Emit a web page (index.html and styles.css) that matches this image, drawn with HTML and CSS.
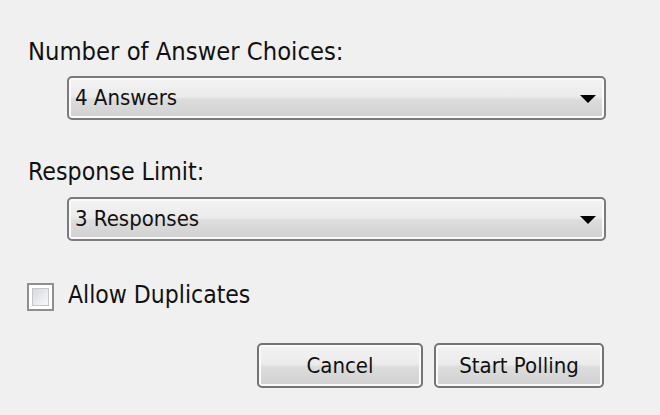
FILE: index.html
```html
<!DOCTYPE html>
<html>
<head>
<meta charset="utf-8">
<link rel="stylesheet" href="styles.css">
</head>
<body>
<div class="dialog">
  <div class="label first-label">Number of Answer Choices:</div>
  <div class="combo first">
    <span class="combo-text">4 Answers</span>
    <svg class="arrow" width="16" height="8" viewBox="0 0 16 8"><polygon points="0,0 16,0 8,8" fill="#000"/></svg>
  </div>
  <div class="label second">Response Limit:</div>
  <div class="combo">
    <span class="combo-text">3 Responses</span>
    <svg class="arrow" width="16" height="8" viewBox="0 0 16 8"><polygon points="0,0 16,0 8,8" fill="#000"/></svg>
  </div>
  <div class="check-row">
    <span class="checkbox"><span class="check-inner"></span></span>
    <span class="check-label">Allow Duplicates</span>
  </div>
  <div class="buttons">
    <div class="btn cancel">Cancel</div>
    <div class="btn start">Start Polling</div>
  </div>
</div>
</body>
</html>
```
FILE: styles.css
```css
html, body {
  margin: 0;
  padding: 0;
  background: #f0f0f0;
}
body {
  width: 660px;
  height: 415px;
  overflow: hidden;
  font-family: "DejaVu Sans Condensed", "DejaVu Sans", sans-serif;
  font-stretch: condensed;
  color: #111111;
}
.dialog {
  display: flex;
  flex-direction: column;
  padding: 38px 54px 0 28px;
}
.label {
  font-size: 25px;
  line-height: 28px;
  height: 28px;
  white-space: nowrap;
}
.label.first-label {
  font-size: 25.3px;
}
.label.second {
  margin-top: 38px;
  font-size: 24.7px;
}
.combo {
  box-sizing: border-box;
  margin-left: 39px;
  height: 44px;
  margin-top: 11px;
  border: 2px solid #7b7b7b;
  border-radius: 5px;
  background: linear-gradient(#f3f3f3 0%, #ebebeb 47%, #dddddd 53%, #d0d0d0 100%);
  box-shadow: inset 0 0 0 2px #fafafa;
  display: flex;
  align-items: center;
  justify-content: space-between;
  padding: 0 8px 0 6px;
}
.combo.first {
  margin-top: 10px;
}
.combo-text {
  font-size: 22px;
  line-height: 26px;
}
.arrow {
  display: block;
  margin-top: 1px;
}
.check-row {
  display: flex;
  align-items: flex-start;
  margin-top: 40px;
  height: 30px;
}
.checkbox {
  box-sizing: border-box;
  width: 27px;
  height: 28px;
  margin-top: 2px;
  margin-left: -1px;
  border: 2px solid #8e8f8f;
  background: #ffffff;
  padding: 3px;
  display: flex;
}
.check-inner {
  flex: 1;
  border: 1px solid #c4c6c9;
  background: linear-gradient(135deg, #d6d9de 0%, #eef0f2 70%, #f7f7f7 100%);
}
.check-label {
  font-size: 24.5px;
  line-height: 28px;
  margin-left: 14px;
}
.buttons {
  display: flex;
  justify-content: flex-end;
  gap: 11px;
  margin-top: 32px;
  margin-right: 2px;
}
.btn {
  box-sizing: border-box;
  height: 45px;
  border: 2px solid #747474;
  border-radius: 5px;
  background: linear-gradient(#f3f3f3 0%, #ebebeb 47%, #dddddd 53%, #d0d0d0 100%);
  box-shadow: inset 0 0 0 2px #fafafa;
  font-size: 22px;
  display: flex;
  align-items: center;
  justify-content: center;
}
.btn.cancel {
  width: 166px;
}
.btn.start {
  width: 170px;
}
```
